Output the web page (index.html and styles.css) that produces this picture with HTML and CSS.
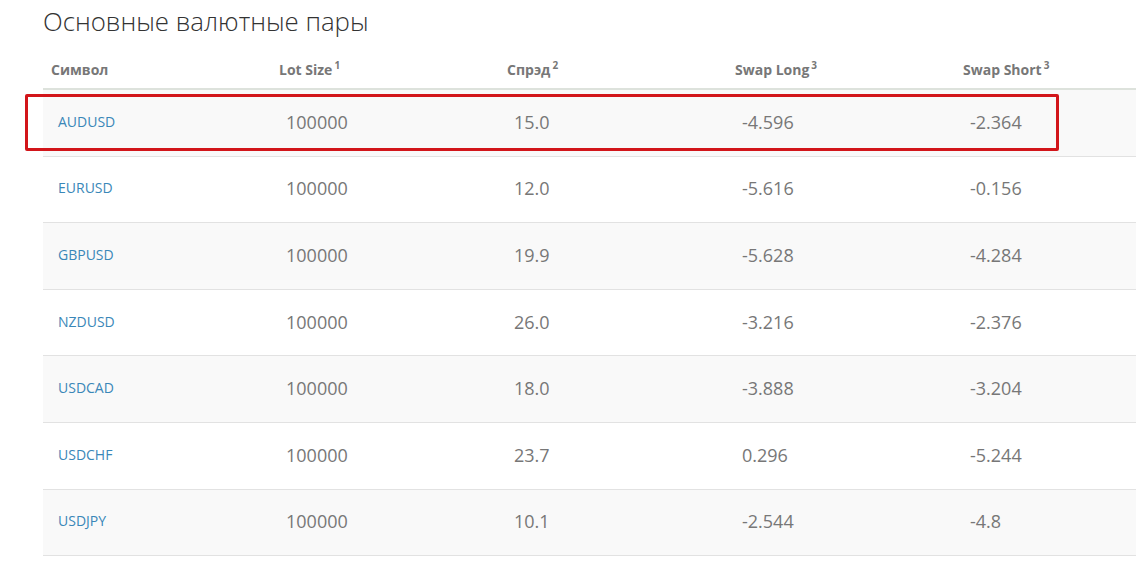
FILE: index.html
```html
<!DOCTYPE html>
<html lang="ru">
<head>
<meta charset="utf-8">
<title>Основные валютные пары</title>
<link rel="stylesheet" href="styles.css">
</head>
<body>
<div class="page">
  <h1 class="title">Основные валютные пары</h1>
  <div class="table-wrap">
    <table class="pairs">
      <thead>
        <tr>
          <th>Символ</th>
          <th>Lot Size<sup>1</sup></th>
          <th>Спрэд<sup>2</sup></th>
          <th>Swap Long<sup>3</sup></th>
          <th>Swap Short<sup>3</sup></th>
        </tr>
      </thead>
      <tbody>
        <tr><td><a href="#">AUDUSD</a></td><td>100000</td><td>15.0</td><td>-4.596</td><td>-2.364</td></tr>
        <tr><td><a href="#">EURUSD</a></td><td>100000</td><td>12.0</td><td>-5.616</td><td>-0.156</td></tr>
        <tr><td><a href="#">GBPUSD</a></td><td>100000</td><td>19.9</td><td>-5.628</td><td>-4.284</td></tr>
        <tr><td><a href="#">NZDUSD</a></td><td>100000</td><td>26.0</td><td>-3.216</td><td>-2.376</td></tr>
        <tr><td><a href="#">USDCAD</a></td><td>100000</td><td>18.0</td><td>-3.888</td><td>-3.204</td></tr>
        <tr><td><a href="#">USDCHF</a></td><td>100000</td><td>23.7</td><td>0.296</td><td>-5.244</td></tr>
        <tr><td><a href="#">USDJPY</a></td><td>100000</td><td>10.1</td><td>-2.544</td><td>-4.8</td></tr>
      </tbody>
    </table>
    <div class="highlight"></div>
  </div>
</div>
</body>
</html>
```

FILE: styles.css
```css
html, body {
  margin: 0;
  padding: 0;
  background: #fff;
  overflow: hidden;
}
body {
  font-family: "Open Sans", "Liberation Sans", sans-serif;
  color: #777;
}
.page {
  padding-left: 43px;
  width: 1200px;
}
.title {
  margin: 3px 0 0;
  font-weight: 300;
  font-size: 25.8px;
  line-height: 36px;
  color: #333;
}
.table-wrap {
  position: relative;
}
.pairs {
  width: 1140px;
  border-collapse: collapse;
  table-layout: fixed;
}
.pairs th {
  text-align: left;
  font-size: 14px;
  font-weight: 700;
  color: #777;
  padding: 0 8px 9px;
  height: 40px;
  vertical-align: bottom;
  border-bottom: 2px solid #dde2dc;
}
.pairs sup {
  font-size: 10px;
  margin-left: 2px;
  vertical-align: 0;
  position: relative;
  top: -6px;
}
.pairs td {
  height: 63.6px;
  padding: 0 15px 2px;
  font-size: 18px;
  color: #777;
  border-bottom: 1px solid #e2e2e2;
  vertical-align: middle;
}
.pairs tbody tr:nth-child(odd) td {
  background: #f9f9f9;
}
.pairs td a {
  font-size: 14px;
  color: #3a87b8;
  text-decoration: none;
  vertical-align: 2px;
}
.highlight {
  position: absolute;
  left: -18px;
  top: 55px;
  width: 1028px;
  height: 51px;
  border: 3px solid #d2151a;
  border-radius: 2px;
  pointer-events: none;
}
```
